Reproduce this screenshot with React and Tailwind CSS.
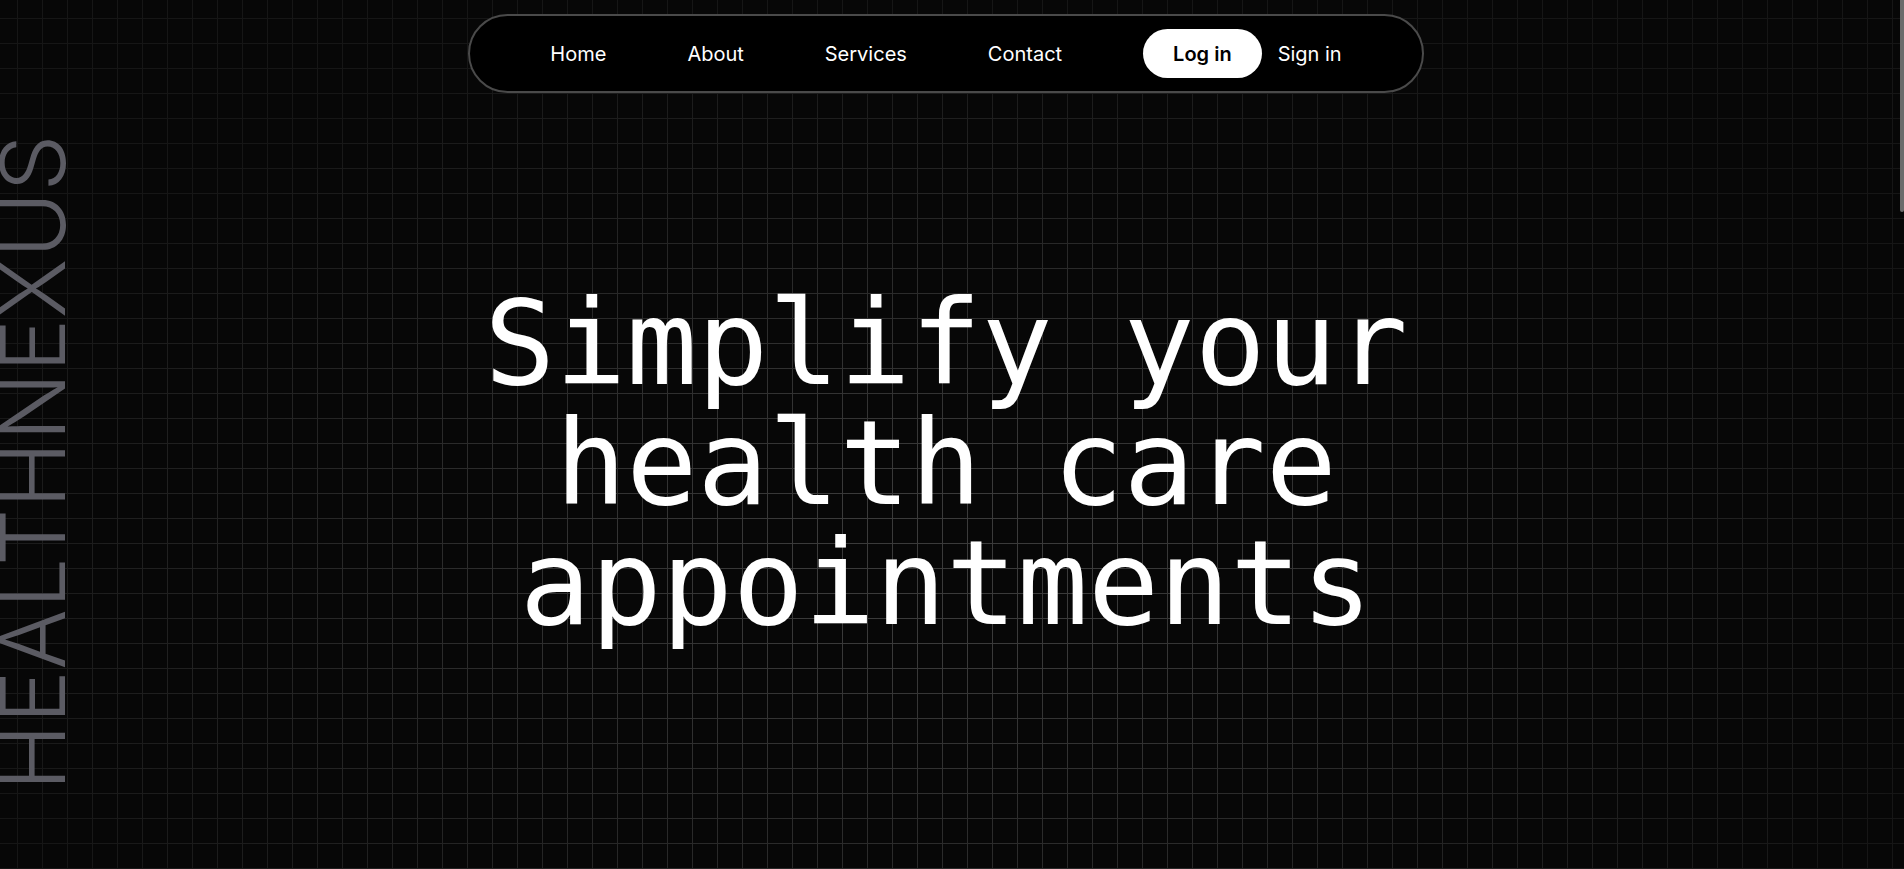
import React from 'react';

const links = ['Home', 'About', 'Services', 'Contact'];

const Navbar = () => {
  return (
    <nav className="flex items-center rounded-full border-2 border-[#4a4a4a] bg-black px-[80px] py-[13px] font-['Inter',sans-serif] text-[20px] text-white">
      <ul className="flex items-center gap-[81px]">
        {links.map((link) => (
          <li key={link}>
            <a href="#" className="leading-none">
              {link}
            </a>
          </li>
        ))}
      </ul>
      <div className="ml-[81px] flex items-center gap-[16px]">
        <button className="h-[49px] rounded-full bg-white px-[30px] font-semibold text-black">Log in</button>
        <button className="text-white">Sign in</button>
      </div>
    </nav>
  );
};

const App = () => {
  return (
    <div className="relative h-screen overflow-y-auto bg-[#070707]">
      {/* scroll thumb */}
      <div className="pointer-events-none absolute right-0 top-0 z-10 h-[212px] w-[4px] rounded-b-full bg-[#6b6b6b]"></div>

      <div className="min-h-[3560px]">
        {/* Hero */}
        <section className="relative h-screen overflow-hidden">
          {/* grid background */}
          <div className="pointer-events-none absolute inset-0 bg-[linear-gradient(to_right,#3a3a3a_1px,transparent_1px),linear-gradient(to_bottom,#3a3a3a_1px,transparent_1px)] bg-[size:25px_25px] bg-[position:17px_18px] [mask-image:radial-gradient(ellipse_55%_65%_at_50%_65%,black_15%,rgba(0,0,0,0.3)_100%)]"></div>

          {/* side brand */}
          <div className="pointer-events-none absolute left-[-12px] top-[134px] rotate-180 font-['Inter',sans-serif] text-[90px] font-light leading-none tracking-[0.5px] text-[#5b5b63] [writing-mode:vertical-rl]">
            HEALTHNEXUS
          </div>

          <div className="relative flex flex-col items-center pr-[12px]">
            <div className="pt-[14px]">
              <Navbar />
            </div>

            <h1 className="mt-[190px] text-center font-['DejaVu_Sans_Mono',monospace] text-[118px] font-normal leading-[120px] text-white">
              Simplify your
              <br />
              health care
              <br />
              appointments
            </h1>
          </div>
        </section>
      </div>
    </div>
  );
};

export default App;
